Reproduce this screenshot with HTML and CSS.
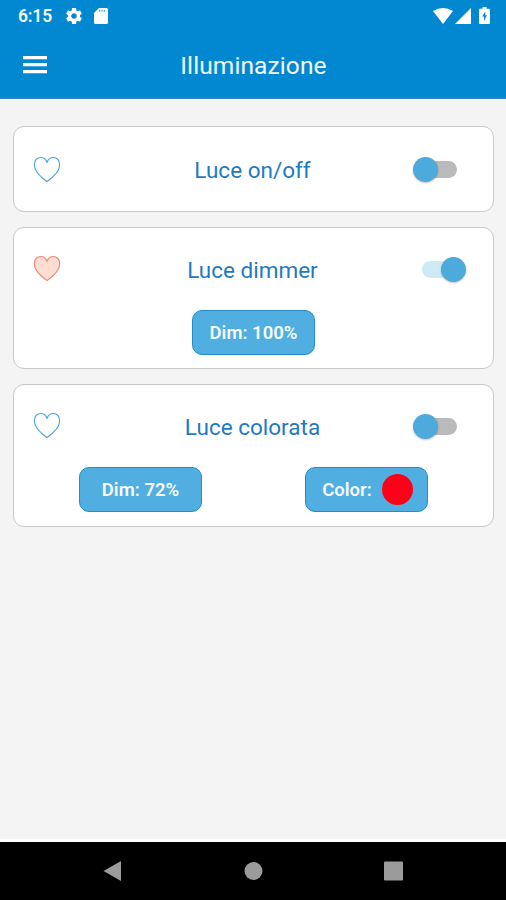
FILE: index.html
```html
<!DOCTYPE html>
<html lang="it">
<head>
<meta charset="utf-8">
<title>Illuminazione</title>
<link rel="stylesheet" href="styles.css">
</head>
<body>
<header class="header">
  <div class="status">
    <span class="clock">6:15</span>
    <svg class="gear" viewBox="2 2 20 20"><path d="M19.43 12.98c.04-.32.07-.64.07-.98s-.03-.66-.07-.98l2.11-1.65c.19-.15.24-.42.12-.64l-2-3.46c-.12-.22-.39-.3-.61-.22l-2.49 1c-.52-.4-1.08-.73-1.69-.98l-.38-2.65C14.46 2.18 14.25 2 14 2h-4c-.25 0-.46.18-.49.42l-.38 2.65c-.61.25-1.17.59-1.69.98l-2.49-1c-.23-.09-.49 0-.61.22l-2 3.46c-.13.22-.07.49.12.64l2.11 1.65c-.04.32-.07.65-.07.98s.03.66.07.98l-2.11 1.65c-.19.15-.24.42-.12.64l2 3.46c.12.22.39.3.61.22l2.49-1c.52.4 1.08.73 1.69.98l.38 2.65c.03.24.24.42.49.42h4c.25 0 .46-.18.49-.42l.38-2.65c.61-.25 1.17-.59 1.69-.98l2.49 1c.23.09.49 0 .61-.22l2-3.46c.12-.22.07-.49-.12-.64l-2.11-1.65zM12 15.5c-1.93 0-3.5-1.57-3.5-3.5s1.57-3.5 3.5-3.5 3.500 1.570 3.500 3.500-1.570 3.500-3.500 3.500z"/></svg>
    <svg class="sd" viewBox="0 0 14 16"><path fill-rule="evenodd" d="M5 0h7.500Q14 0 14 1.500v13Q14 16 12.500 16h-11Q0 16 0 14.500V5zM5 2.200v1.200h1.200V2.200zm2.400 0v1.200h1.200V2.200zm2.400 0v1.200H11V2.200z"/></svg>
    <span class="spacer"></span>
    <svg class="wifi" viewBox="0 0 20 16"><path d="M10 16 0 3Q10-3 20 3z"/></svg>
    <svg class="signal" viewBox="0 0 16 16"><path d="M16 0v16H0z"/></svg>
    <svg class="battery" viewBox="0 0 11 17"><path fill-rule="evenodd" d="M3.500 0h4v1.700H10q1 0 1 1V16q0 1-1 1H1q-1 0-1-1V2.700q0-1 1-1h2.500zM6.300 4.500 3.200 9.400h1.900v4.600L7.900 8.300H6.300z"/></svg>
  </div>
  <div class="toolbar">
    <svg class="menu" viewBox="0 0 24 18"><path d="M0 0h24v3.300H0zM0 7h24v3.300H0zM0 14h24v3.300H0z"/></svg>
    <h1 class="title">Illuminazione</h1>
  </div>
</header>
<main class="lights">
  <section class="card">
    <div class="row">
      <svg class="heart" viewBox="0 0 28 27"><path d="M14 25.500C10 22.800 1.300 16.500 1.300 8.500c0-4 2.700-7 6.500-7 3 0 5 1.700 6.200 4.700 1.200-3 3.200-4.700 6.200-4.700 3.800 0 6.500 3 6.500 7 0 8-8.700 14.300-12.700 17z"/></svg>
      <h2 class="name">Luce on/off</h2>
      <span class="switch"></span>
    </div>
  </section>
  <section class="card card-dimmer">
    <div class="row">
      <svg class="heart heart-on" viewBox="0 0 28 27"><path d="M14 25.500C10 22.800 1.300 16.500 1.300 8.500c0-4 2.700-7 6.500-7 3 0 5 1.700 6.200 4.700 1.200-3 3.200-4.700 6.200-4.700 3.800 0 6.500 3 6.500 7 0 8-8.700 14.300-12.700 17z"/></svg>
      <h2 class="name">Luce dimmer</h2>
      <span class="switch switch-on"></span>
    </div>
    <div class="actions"><button class="button">Dim: 100%</button></div>
  </section>
  <section class="card card-color">
    <div class="row">
      <svg class="heart" viewBox="0 0 28 27"><path d="M14 25.500C10 22.800 1.300 16.500 1.300 8.500c0-4 2.700-7 6.500-7 3 0 5 1.700 6.200 4.700 1.200-3 3.200-4.700 6.200-4.700 3.800 0 6.500 3 6.500 7 0 8-8.700 14.300-12.700 17z"/></svg>
      <h2 class="name">Luce colorata</h2>
      <span class="switch"></span>
    </div>
    <div class="actions">
      <button class="button">Dim: 72%</button>
      <button class="button button-color">Color:<span class="swatch"></span></button>
    </div>
  </section>
</main>
<nav class="navbar">
  <svg viewBox="0 0 20 22"><path d="M18 1v20L.5 11z"/></svg>
  <svg viewBox="0 0 20 22"><circle cx="10.500" cy="11" r="9"/></svg>
  <svg viewBox="0 0 20 22"><rect x="1" y="1.500" width="19" height="19" rx="1"/></svg>
</nav>
</body>
</html>
```

FILE: styles.css
```css
* { box-sizing: border-box; }

body {
  margin: 0;
  height: 900px;
  display: flex;
  flex-direction: column;
  background: #f4f4f4;
  font-family: Roboto, sans-serif;
  overflow: hidden;
}

svg { display: block; flex: none; }

.header {
  height: 99px;
  background: #0288d1;
  border-bottom: 1px solid #3b86cb;
  color: #f2f8fd;
  fill: #fff;
}

.status {
  height: 32px;
  padding: 0 16px 0 18px;
  display: flex;
  align-items: center;
}

.clock {
  width: 48px;
  font-size: 17.500px;
  font-weight: 600;
  letter-spacing: -.2px;
  line-height: 32px;
}

.gear { width: 16px; height: 16px; }
.sd { width: 14px; height: 16px; margin-left: 12px; }
.spacer { flex: 1; }
.wifi { width: 20px; height: 16px; margin-top: -1px; }
.signal { width: 16px; height: 16px; margin: -1px 0 0 2px; }
.battery { width: 11px; height: 17px; margin: -2px 0 0 8px; }

.toolbar {
  height: 66px;
  padding: 0 23px;
  display: grid;
  grid-template-columns: 24px 1fr 24px;
  align-items: center;
}

.menu { width: 24px; height: 18px; }

.title {
  margin: 2px 0 0 1px;
  text-align: center;
  font-size: 24.500px;
  font-weight: 400;
  letter-spacing: .1px;
  line-height: 30px;
}

.lights {
  flex: 1;
  padding: 27px 12px 0 13px;
  display: flex;
  flex-direction: column;
  gap: 15px;
  border-bottom: 3px solid #fff;
}

.card {
  height: 86px;
  padding: 0 19px;
  background: #fff;
  border: 1px solid #c9c9c9;
  border-radius: 11px;
}

.card-dimmer { height: 142px; }
.card-color { height: 143px; }

.row {
  height: 84px;
  display: grid;
  grid-template-columns: 28px 1fr 52px;
  align-items: center;
}

.card-dimmer .row,
.card-color .row { height: 82px; }

.heart {
  width: 28px;
  height: 27px;
  fill: none;
  stroke: #50a8dc;
  stroke-width: 1.200;
}

.heart-on { fill: #ffddd2; stroke: #ee8877; }

.card-dimmer .heart,
.card-color .heart { margin-top: -1px; }

.name {
  margin: 1px 0 0 22px;
  text-align: center;
  color: #1f7ac3;
  font-size: 22.500px;
  font-weight: 370;
  line-height: 28px;
  white-space: nowrap;
}

.switch {
  width: 35px;
  height: 17px;
  display: flex;
  align-items: center;
  border-radius: 9px;
  background: #bababa;
}

.switch::before {
  content: "";
  flex: none;
  width: 25px;
  height: 25px;
  margin-left: -9px;
  border-radius: 50%;
  background: #4caadc;
  box-shadow: 0 1px 2px rgba(0, 0, 0, .25);
}

.switch-on { background: #cdeaf5; }
.switch-on::before { margin-left: 19px; }

.actions {
  display: flex;
  justify-content: center;
  gap: 103px;
}

.button {
  width: 123px;
  height: 45px;
  padding: 0;
  display: flex;
  align-items: center;
  justify-content: center;
  border: 1px solid #268bc8;
  border-radius: 10px;
  background: #50aee0;
  color: #f6fcff;
  font: 600 18.500px/24px Roboto, sans-serif;
}

.button-color { padding-left: 2px; }

.swatch {
  width: 31px;
  height: 31px;
  margin-left: 10px;
  border-radius: 50%;
  background: #ff0018;
}

.navbar {
  height: 58px;
  display: flex;
  justify-content: center;
  align-items: center;
  gap: 120px;
  background: #000;
  fill: #9b9b9b;
}

.navbar svg { width: 20px; height: 22px; }
```
